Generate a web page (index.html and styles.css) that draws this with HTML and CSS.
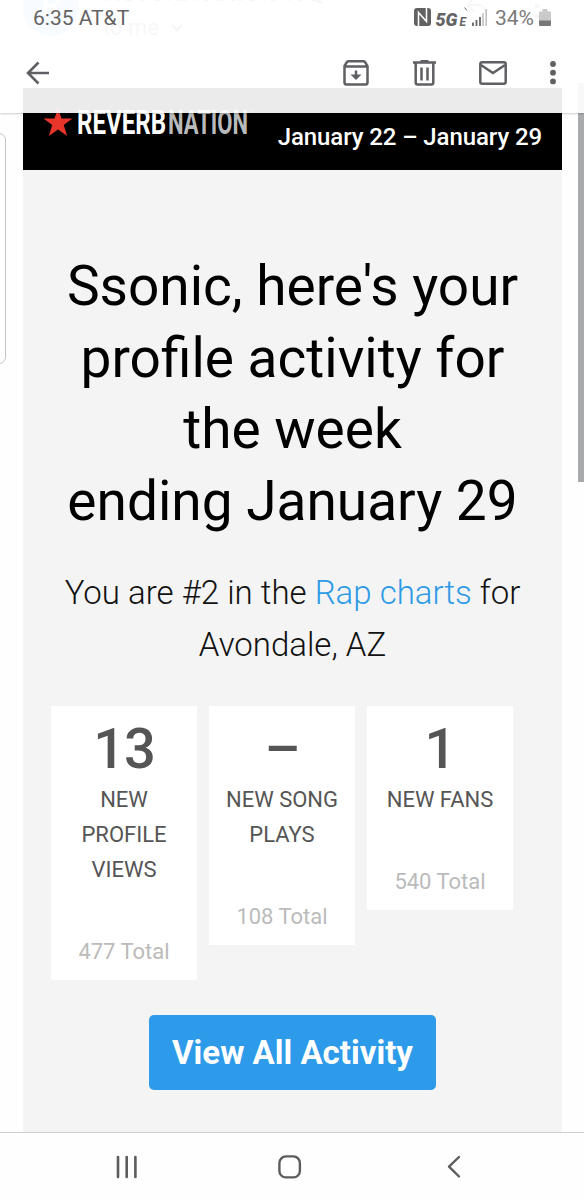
FILE: index.html
```html
<!DOCTYPE html>
<html lang="en">
<head>
    <meta charset="UTF-8">
    <meta name="viewport" content="width=device-width, initial-scale=1.0">
    <title>ReverbNation</title>
    <link rel="stylesheet" href="styles.css">
</head>
<body>
    <div class="phone">
        <!-- scrolled message -->
        <div class="message">
            <div class="sender">
                <div class="avatar">R</div>
                <div class="from">
                    <p class="name">ReverbNation HQ</p>
                    <p class="to">to me
                        <svg width="12" height="8" viewBox="0 0 12 8"><path d="M1 1l5 5 5-5" fill="none" stroke="#777" stroke-width="2"/></svg>
                    </p>
                </div>
                <svg class="reply" width="80" height="30" viewBox="0 0 80 30">
                    <path d="M10 -2L2 5l8 7M2 5h12q5 0 6 7" fill="none" stroke="#999" stroke-width="2"/>
                    <circle cx="72" cy="6" r="2.5" fill="#999"/><circle cx="72" cy="16" r="2.5" fill="#999"/>
                </svg>
            </div>
            <div class="mail">
                <div class="topbar">
                    <svg class="logo" width="216" height="40" viewBox="0 0 216 40">
                        <path d="M14 0l3.500 10.500h11l-8.800 6.600 3.500 10.900-9.200-6.600-9.200 6.600 3.400-10.900L-.5 10.500h11z" fill="#e8352b"/>
                        <text x="33" y="26" textLength="89" lengthAdjust="spacingAndGlyphs" class="reverb">REVERB</text>
                        <text x="124" y="26" textLength="80" lengthAdjust="spacingAndGlyphs" class="nation">NATION</text>
                        <text x="206" y="6" class="tm">™</text>
                    </svg>
                    <span class="dates">January 22 – January 29</span>
                </div>
                <h1>Ssonic, here's your<br>profile activity for<br>the week<br>ending January 29</h1>
                <p class="rank">You are #2 in the <a>Rap charts</a> for<br>Avondale, AZ</p>
                <div class="stats">
                    <div class="stat">
                        <strong>13</strong>
                        <p>NEW<br>PROFILE<br>VIEWS</p>
                        <span>477 Total</span>
                    </div>
                    <div class="stat">
                        <strong>–</strong>
                        <p>NEW SONG<br>PLAYS</p>
                        <span>108 Total</span>
                    </div>
                    <div class="stat">
                        <strong>1</strong>
                        <p>NEW FANS</p>
                        <span>540 Total</span>
                    </div>
                </div>
                <a class="btn">View All Activity</a>
            </div>
        </div>
        <div class="edge"></div>
        <div class="scrollbar"></div>

        <!-- status bar and toolbar -->
        <div class="header">
            <div class="status">
                <span class="clock">6:35 AT&amp;T</span>
                <svg class="nfc" width="17" height="18" viewBox="0 0 17 18">
                    <rect width="17" height="18" rx="3" fill="#626262"/>
                    <path d="M4.500 18V4.500l8 9V0" fill="none" stroke="#fff" stroke-width="1.500"/>
                </svg>
                <span class="net">5G</span><span class="net-e">E</span>
                <svg class="signal" width="15" height="17" viewBox="0 0 15 17">
                    <path d="M1 13.500V17M4.500 11V17M8 8V17" stroke="#666" stroke-width="1.800"/>
                    <path d="M11 4V17M14.200 0V17" stroke="#c2c2c2" stroke-width="1.600"/>
                </svg>
                <span class="percent">34%</span>
                <svg class="battery" width="12" height="17" viewBox="0 0 12 17">
                    <path d="M1 2.500h2.500V0h5v2.500H11q1 0 1 1V12H0V3.500q0-1 1-1z" fill="#cacaca"/>
                    <path d="M0 11.500h12V16q0 1-1 1H1q-1 0-1-1z" fill="#777"/>
                </svg>
                <svg class="tick" width="4" height="5" viewBox="0 0 4 5"><path d="M.5.5l2.500 3" stroke="#666"/></svg>
            </div>
            <div class="toolbar">
                <svg class="back" width="24" height="24" viewBox="0 0 24 24">
                    <path d="M12.500 1.500L2 12l10.500 10.500M2 12h21" fill="none" stroke="#5f6063" stroke-width="2.600"/>
                </svg>
                <svg class="archive" width="26" height="26" viewBox="0 0 26 26" fill="none" stroke="#5f6063" stroke-width="2.500">
                    <path d="M1.500 6L4 2q.5-.7 1.500-.7h15q1 0 1.500.7L24.500 6v16.500q0 2-2 2h-19q-2 0-2-2zM2 6.500h22"/>
                    <path d="M13 10.500V17"/><path d="M7.500 14.500h11L13 20z" fill="#5f6063" stroke="none"/>
                </svg>
                <svg width="23" height="26" viewBox="0 0 23 26" fill="none" stroke="#5f6063" stroke-width="2.500">
                    <path d="M0 2.500h23M7.500 1.200h8M2.700 3v19.500q0 2 2 2h13.600q2 0 2-2V3M8.500 7.500v13M14.500 7.500v13"/>
                </svg>
                <svg width="28" height="24" viewBox="0 0 28 24" fill="none" stroke="#5f6063" stroke-width="2.500">
                    <rect x="1.300" y="1.300" width="25.400" height="21.400" rx="2"/><path d="M2 4l12 8 12-8"/>
                </svg>
                <svg width="6" height="24" viewBox="0 0 6 24" fill="#5f6063">
                    <circle cx="3" cy="3" r="2.900"/><circle cx="3" cy="11.700" r="2.900"/><circle cx="3" cy="20.400" r="2.900"/>
                </svg>
            </div>
        </div>

        <!-- navigation buttons -->
        <div class="nav">
            <svg width="22" height="24" viewBox="0 0 22 24"><path d="M2 2v20M10.700 2v20M19.400 2v20" stroke="#5c5c5e" stroke-width="2.600" stroke-linecap="round"/></svg>
            <svg class="home" width="24" height="24" viewBox="0 0 24 24"><rect x="1.400" y="1.400" width="20.500" height="21" rx="6.500" fill="none" stroke="#5c5c5e" stroke-width="2.400"/></svg>
            <svg width="14" height="24" viewBox="0 0 14 24"><path d="M12 2L2 11.700 12 21.500" fill="none" stroke="#5c5c5e" stroke-width="2.400" stroke-linecap="round" stroke-linejoin="round"/></svg>
        </div>
    </div>
</body>
</html>
```
FILE: styles.css
```css
*{
    margin: 0;
    padding: 0;
    box-sizing: border-box;
}
body{
    font-family: Roboto, "Liberation Sans", sans-serif;
    background: #fff;
}
svg{
    display: block;
    flex: none;
}
.phone{
    width: 584px;
    height: 1200px;
    position: relative;
    overflow: hidden;
    background: #fefefe;
}

/* message */
.message{
    padding: 0 22px 0 23px;
}
.sender{
    height: 88px;
    display: flex;
    align-items: flex-start;
}
.avatar{
    width: 56px;
    height: 56px;
    margin-top: -20px;
    border-radius: 50%;
    background: #a8c7fa;
    color: #fff;
    font-size: 34px;
    line-height: 48px;
    text-align: center;
}
.from{
    width: 386px;
    padding-left: 24px;
    color: #777;
    font-size: 27px;
}
.name{
    margin-top: -22px;
    line-height: 28px;
    letter-spacing: 1px;
}
.to{
    display: flex;
    align-items: center;
    gap: 12px;
    color: #999;
    line-height: 43px;
    font-size: 22px;
}
.mail{
    height: 1112px;
    background: #f4f4f4;
    text-align: center;
}
.topbar{
    height: 82px;
    padding: 20px 20px 0 21px;
    background: #000;
    display: flex;
    justify-content: space-between;
}
.logo{
    overflow: visible;
}
.reverb, .nation{
    font-size: 33px;
    font-weight: 700;
    fill: #fff;
}
.nation{
    fill: #b9babc;
}
.tm{
    font-size: 6px;
    fill: #b9babc;
}
.dates{
    margin: 13px 0 0 -20px;
    color: #fff;
    font-size: 24px;
    font-weight: 500;
    letter-spacing: -.1px;
    line-height: 32px;
    white-space: nowrap;
}
h1{
    margin-top: 81px;
    color: #000;
    font-size: 55px;
    font-weight: 400;
    line-height: 71.500px;
}
.rank{
    margin-top: 30px;
    color: #111;
    font-size: 33px;
    font-weight: 300;
    line-height: 52px;
}
.rank a{
    color: #2e9ae6;
}
.stats{
    height: 274px;
    margin-top: 35px;
    padding-left: 28px;
    display: flex;
    align-items: flex-start;
    gap: 12px;
}
.stat{
    width: 146px;
    padding: 10px 0 11px;
    background: #fff;
    color: #555;
}
.stat strong{
    display: block;
    font-size: 56px;
    font-weight: 500;
    letter-spacing: -1px;
    line-height: 66px;
}
.stat p{
    font-size: 22px;
    line-height: 35px;
}
.stat span{
    display: block;
    margin-top: 47px;
    color: #bbb;
    font-size: 22px;
    line-height: 35px;
}
.btn{
    display: block;
    width: 287px;
    height: 75px;
    margin: 35px auto 0;
    border-radius: 5px;
    background: #2d9be9;
    color: #fff;
    font-size: 33px;
    font-weight: 700;
    line-height: 75px;
}

/* edge of the previous card and scrollbar */
.edge{
    width: 20px;
    height: 231px;
    position: absolute;
    top: 133px;
    left: -14px;
    border: 1px solid #c4c4c4;
    border-radius: 7px;
}
.scrollbar{
    width: 6px;
    height: 399px;
    position: absolute;
    top: 83px;
    right: 0;
    background: #a9aaab;
}

/* header */
.header{
    width: 100%;
    height: 113px;
    position: absolute;
    top: 0;
    left: 0;
    background: rgba(255, 255, 255, .92);
    box-shadow: 0 1px 2px rgba(0, 0, 0, .2);
}
.status{
    height: 36px;
    padding: 0 33px;
    position: relative;
    display: flex;
    align-items: center;
    color: #646464;
    font-size: 21px;
    line-height: 36px;
}
.nfc, .signal, .battery{
    margin-top: -2px;
}
.clock{
    flex: 1;
}
.net{
    margin: 3px 0 0 4px;
    font-size: 18px;
    font-weight: 900;
    font-style: italic;
}
.net-e{
    margin: 7px 0 0 2px;
    font-size: 12px;
    font-weight: 700;
    font-style: italic;
}
.signal{
    margin-left: 6px;
}
.percent{
    margin: 0 5px 0 8px;
    color: #7a7a7a;
}
.tick{
    position: absolute;
    top: 7px;
    left: 464px;
}
.toolbar{
    padding: 24px 28px 0 26px;
    display: flex;
    align-items: center;
    gap: 43px;
}
.back{
    margin-right: auto;
}
.archive{
    margin-right: 1px;
}

/* bottom navigation */
.nav{
    width: 100%;
    height: 68px;
    padding: 0 123px 0 116px;
    position: absolute;
    bottom: 0;
    left: 0;
    display: flex;
    align-items: center;
    justify-content: space-between;
    background: rgba(254, 254, 254, .94);
    border-top: 1px solid #cfcfcf;
}
.home{
    margin-right: 6px;
}
```
